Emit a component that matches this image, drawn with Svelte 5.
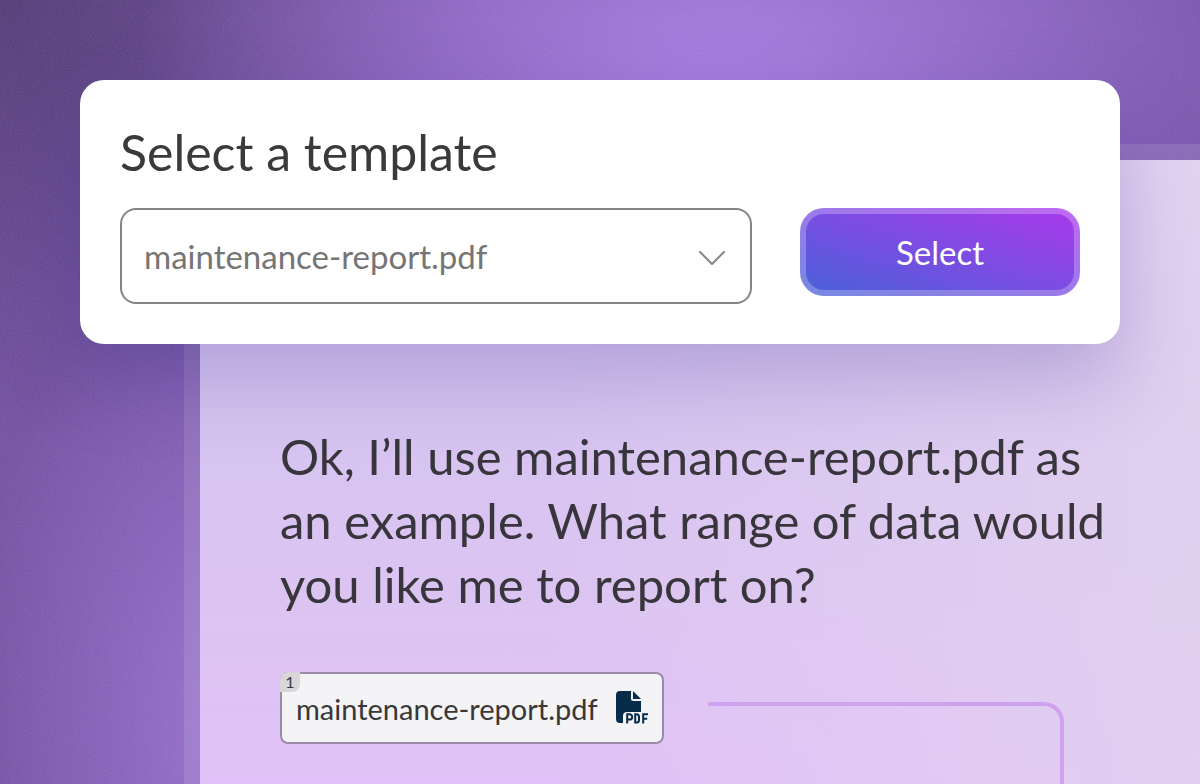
<script>
  const templates = ['maintenance-report.pdf'];
  let selected = $state(templates[0]);
  let source = $state(templates[0]);
</script>

<main class="page">
  <svg class="grain" aria-hidden="true">
    <filter id="grain">
      <feTurbulence type="fractalNoise" baseFrequency="0.6" numOctaves="2" />
    </filter>
    <rect width="100%" height="100%" filter="url(#grain)" />
  </svg>

  <form class="picker" onsubmit={(e) => { e.preventDefault(); source = selected; }}>
    <label class="title" for="template">Select a template</label>
    <div class="controls">
      <div class="select-box">
        <select id="template" bind:value={selected}>
          {#each templates as name}
            <option value={name}>{name}</option>
          {/each}
        </select>
        <svg class="chevron" viewBox="0 0 28 16" aria-hidden="true">
          <path d="M2 2 14 14 26 2" />
        </svg>
      </div>
      <button class="submit" type="submit">Select</button>
    </div>
  </form>

  <section class="panel">
    <div class="reply">
      <p>Ok, I’ll use {source} as an example. What range of data would you like me to report on?</p>
      <div class="sources">
        <a class="chip" href="#source">
          <span class="count">1</span>
          <span>{source}</span>
          <svg class="file" viewBox="0 0 32 34" aria-hidden="true">
            <path class="solid" d="M4 0h11v8a2 2 0 0 0 2 2h8v11H11a4 4 0 0 0-4 4v7H4a4 4 0 0 1-4-4V4a4 4 0 0 1 4-4Z" />
            <path class="solid" d="M17 0l8 8h-8Z" />
            <path class="line" d="M11.2 32.5V23.2h2.3a2.7 2.7 0 0 1 0 5.4h-2.3M19.2 23.2v8.2h1.3a2.5 2.5 0 0 0 2.5-2.5v-3.2a2.5 2.5 0 0 0-2.5-2.5ZM27.2 32.5v-9.3H32M27.2 27.7h4" />
          </svg>
        </a>
        <div class="connector"></div>
      </div>
    </div>
  </section>
</main>

<style>
  :global(body) {
    margin: 0;
  }

  .page {
    position: relative;
    box-sizing: border-box;
    height: 100vh;
    padding-top: 80px;
    overflow: hidden;
    display: flex;
    flex-direction: column;
    font-family: Lato, 'Liberation Sans', sans-serif;
    color: #38363c;
    background:
      radial-gradient(ellipse 580px 320px at 60% 8%, #a678e2 0%, #a276dc 15%, #a276dc00 100%),
      radial-gradient(ellipse 480px 440px at 0% 0%, #533a78 0%, #533a7800 100%),
      radial-gradient(ellipse 260px 480px at 19% 92%, #9871d0 0%, #9871d000 100%),
      linear-gradient(100deg, #7450a4 0%, #7450a8 100%);
  }

  .grain {
    position: absolute;
    inset: 0;
    width: 100%;
    height: 100%;
    opacity: 0.14;
  }

  .picker {
    position: relative;
    z-index: 2;
    margin: 0 80px;
    padding: 40px;
    display: flex;
    flex-direction: column;
    gap: 24px;
    border-radius: 24px;
    background: #fff;
    box-shadow: 0 32px 80px #4436984a;
  }

  .title {
    font-size: 50px;
    line-height: 64px;
    color: #3a3a3a;
  }

  .controls {
    display: flex;
    align-items: flex-start;
    gap: 48px;
  }

  .select-box {
    flex: 1;
    display: grid;
    align-items: center;
  }

  select,
  .chevron {
    grid-area: 1 / 1;
  }

  select {
    box-sizing: border-box;
    width: 100%;
    height: 96px;
    padding: 0 72px 0 22px;
    appearance: none;
    border: 2px solid #858585;
    border-radius: 16px;
    background: #fff;
    color: #757575;
    font: inherit;
    font-size: 33px;
  }

  .chevron {
    justify-self: end;
    width: 28px;
    height: 16px;
    margin: 4px 26px 0 0;
    pointer-events: none;
    fill: none;
    stroke: #858585;
    stroke-width: 2;
    stroke-linecap: round;
    stroke-linejoin: round;
  }

  .submit {
    width: 280px;
    height: 88px;
    border: 6px solid #ffffff40;
    border-radius: 24px;
    background: linear-gradient(to top right, #4662d8 0%, #7b4de2 50%, #ab38ec 100%) border-box;
    color: #fff;
    font: inherit;
    font-size: 33px;
  }

  .panel {
    position: relative;
    z-index: 1;
    flex: 1 0 auto;
    margin-top: -200px;
    margin-left: 184px;
    border: 16px solid #ffffff1c;
    border-right: 0;
    border-bottom: 0;
    background:
      linear-gradient(90deg, #e2d0f200 35%, #e2d2efcc 100%) padding-box,
      linear-gradient(180deg, #ecd6fa 0%, #d6c4f0 35%, #dcc4f2 62%, #e3c0fa 100%) padding-box;
  }

  .reply {
    padding: 264px 80px 40px;
    display: flex;
    flex-direction: column;
    gap: 56px;
  }

  p {
    margin: 0;
    font-size: 49px;
    line-height: 64px;
  }

  .sources {
    display: flex;
    align-items: flex-start;
    gap: 44px;
  }

  .chip {
    position: relative;
    box-sizing: border-box;
    min-width: 384px;
    height: 72px;
    padding: 0 14px;
    display: flex;
    align-items: center;
    justify-content: space-between;
    border: 2px solid #9c8ba8;
    border-radius: 8px;
    background: #f4f3f5;
    color: #38383a;
    font-size: 29px;
    text-decoration: none;
  }

  .count {
    position: absolute;
    top: -2px;
    left: -2px;
    width: 20px;
    height: 20px;
    border-radius: 8px 0 8px 0;
    background: #d8d6d9;
    font-size: 16px;
    line-height: 20px;
    text-align: center;
  }

  .file {
    width: 32px;
    height: 34px;
  }

  .solid {
    fill: #062c49;
  }

  .line {
    fill: none;
    stroke: #062c49;
    stroke-width: 2;
  }

  .connector {
    flex: 1;
    height: 120px;
    margin-top: 30px;
    margin-right: 56px;
    border-top: 4px solid #cfa2f0;
    border-right: 4px solid #cfa2f0;
    border-radius: 2px 20px 0 0;
  }
</style>
